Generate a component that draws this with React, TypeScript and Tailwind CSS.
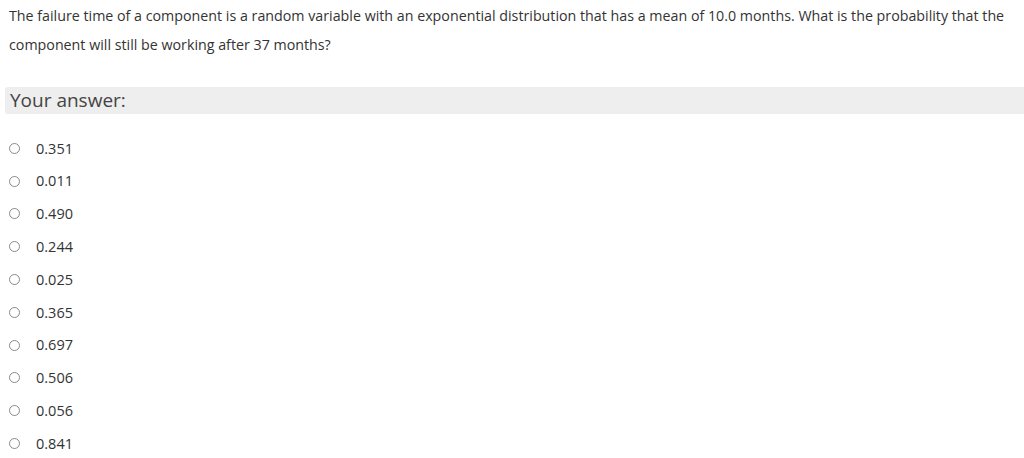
import React from "react";

const options = ["0.351", "0.011", "0.490", "0.244", "0.025", "0.365", "0.697", "0.506", "0.056", "0.841"];

export default function App() {
  return (
    <div className="w-[1024px] h-[458px] bg-white overflow-hidden text-[#333] font-['Open_Sans',sans-serif]">
      <div className="pl-[9px] pt-[1px] text-[14.25px] leading-[29px] pr-[10px]">
        The failure time of a component is a random variable with an exponential distribution that has a mean of 10.0 months. What is the probability that the component will still be working after 37 months?
      </div>
      <div className="ml-[5px] mt-[28px] h-[27px] bg-[#eeeeee] rounded-l-[3px] flex items-center pl-[5px] text-[19px] text-[#444]">
        Your answer:
      </div>
      <div className="mt-[18px] flex flex-col">
        {options.map((o) => (
          <label key={o} className="h-[32.8px] flex items-center pl-[9px] text-[14.5px]">
            <span className="w-[11px] h-[11px] rounded-full border border-[#8a8a8a] bg-white shrink-0" />
            <span className="ml-[16px]">{o}</span>
          </label>
        ))}
      </div>
    </div>
  );
}
